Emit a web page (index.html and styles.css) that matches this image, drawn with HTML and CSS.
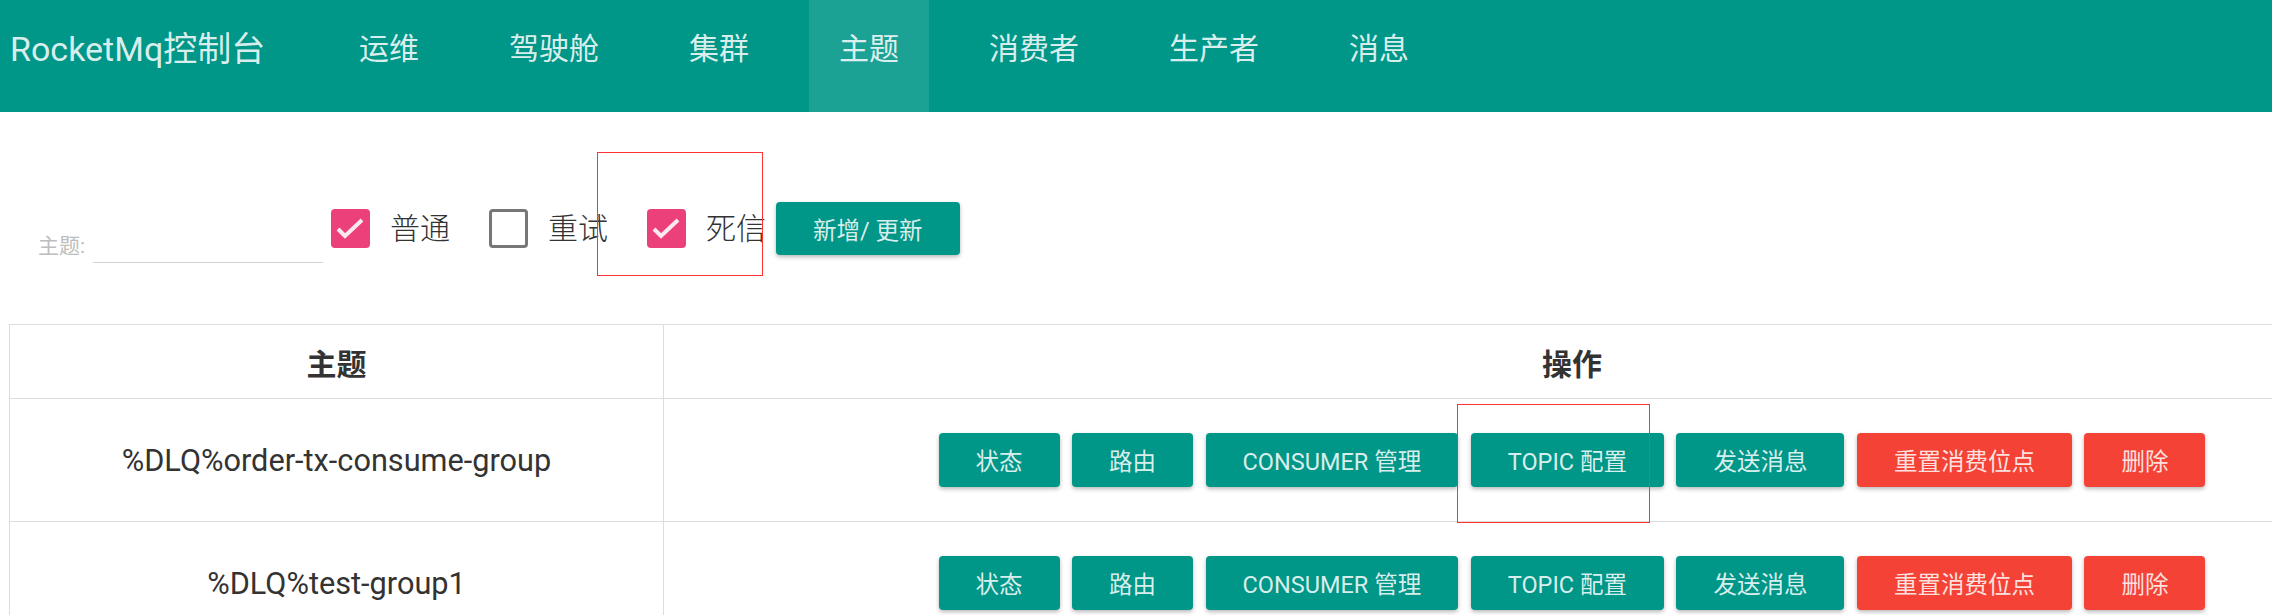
FILE: index.html
```html
<!DOCTYPE html>
<html lang="zh-CN">
<head>
    <meta charset="UTF-8">
    <meta name="viewport" content="width=device-width, initial-scale=1.0">
    <title>RocketMq控制台</title>
    <link rel="stylesheet" href="styles.css">
</head>
<body>
    <header class="navbar">
        <div class="brand">RocketMq控制台</div>
        <ul class="nav">
            <li>运维</li>
            <li>驾驶舱</li>
            <li>集群</li>
            <li class="active">主题</li>
            <li>消费者</li>
            <li>生产者</li>
            <li>消息</li>
        </ul>
    </header>

    <div class="toolbar">
        <div class="search">
            <label class="search-label">主题:</label>
            <input type="text" class="search-input">
        </div>
        <label class="check">
            <span class="box checked">
                <svg viewBox="0 0 39 39"><polyline points="7,20 14,27 31,11"/></svg>
            </span>
            普通
        </label>
        <label class="check">
            <span class="box"></span>
            重试
        </label>
        <label class="check">
            <span class="box checked">
                <svg viewBox="0 0 39 39"><polyline points="7,20 14,27 31,11"/></svg>
            </span>
            死信
        </label>
        <button class="btn">新增/ 更新</button>
        <!-- annotation drawn over the screenshot -->
        <div class="mark"></div>
    </div>

    <table class="topic-table">
        <colgroup>
            <col class="col-topic">
            <col>
        </colgroup>
        <thead>
            <tr>
                <th>主题</th>
                <th>操作</th>
            </tr>
        </thead>
        <tbody>
            <tr>
                <td>%DLQ%order-tx-consume-group</td>
                <td>
                    <div class="actions">
                        <button class="btn">状态</button>
                        <button class="btn">路由</button>
                        <button class="btn">CONSUMER 管理</button>
                        <button class="btn">TOPIC 配置</button>
                        <button class="btn">发送消息</button>
                        <button class="btn btn-danger">重置消费位点</button>
                        <button class="btn btn-danger">删除</button>
                    </div>
                    <div class="mark mark-topic"></div>
                </td>
            </tr>
            <tr>
                <td>%DLQ%test-group1</td>
                <td>
                    <div class="actions">
                        <button class="btn">状态</button>
                        <button class="btn">路由</button>
                        <button class="btn">CONSUMER 管理</button>
                        <button class="btn">TOPIC 配置</button>
                        <button class="btn">发送消息</button>
                        <button class="btn btn-danger">重置消费位点</button>
                        <button class="btn btn-danger">删除</button>
                    </div>
                </td>
            </tr>
        </tbody>
    </table>
</body>
</html>
```

FILE: styles.css
```css
html, body {
    overflow: hidden;
}
body {
    margin: 0;
    font-family: Roboto, "Noto Sans CJK SC", sans-serif;
    color: #333;
    background: #fff;
}
.navbar {
    display: flex;
    height: 112px;
    background-color: #009688;
    color: rgba(255, 255, 255, 0.86);
}
.brand {
    width: 329px;
    box-sizing: border-box;
    padding-left: 10px;
    font-size: 34px;
    line-height: 98px;
    white-space: nowrap;
}
.nav {
    display: flex;
    margin: 0;
    padding: 0;
    list-style: none;
}
.nav li {
    padding: 0 30px;
    margin-right: 30px;
    font-size: 30px;
    line-height: 98px;
    height: 112px;
}
.nav li.active {
    background: rgba(255, 255, 255, 0.11);
}
.toolbar {
    position: relative;
    display: flex;
    align-items: center;
    padding: 90px 0 69px 38px;
}
.search {
    display: flex;
    align-items: flex-end;
    align-self: flex-end;
    margin-bottom: -8px;
}
.search-label {
    font-size: 21px;
    line-height: 21px;
    color: #bdbdbd;
    margin-bottom: 6px;
}
.search-input {
    width: 230px;
    height: 30px;
    margin-left: 8px;
    padding: 0;
    border: none;
    border-bottom: 1px solid #d2d2d2;
    outline: none;
    background: transparent;
}
.check {
    display: flex;
    align-items: center;
    margin-right: 39px;
    font-size: 30px;
    font-weight: 300;
    color: #333;
    line-height: 40px;
}
.search + .check {
    margin-left: 8px;
}
.check:last-of-type {
    margin-right: 10px;
}
.box {
    display: inline-block;
    width: 39px;
    height: 39px;
    box-sizing: border-box;
    margin-right: 20px;
    border: 3px solid #777;
    border-radius: 4px;
}
.box.checked {
    border: none;
    background: #ec407a;
}
.box svg {
    display: block;
    width: 39px;
    height: 39px;
}
.box polyline {
    fill: none;
    stroke: #fde8ef;
    stroke-width: 4;
}
.btn {
    height: 53px;
    padding: 0 37px;
    border: none;
    border-radius: 4px;
    background: #009688;
    color: rgba(255, 255, 255, 0.86);
    font-family: Roboto, "Noto Sans CJK SC", sans-serif;
    font-size: 23.5px;
    white-space: nowrap;
    box-shadow: 0 2px 4px rgba(0, 0, 0, 0.28);
    cursor: pointer;
}
.btn-danger {
    background: #f44336;
}
.mark {
    position: absolute;
    left: 597px;
    top: 40px;
    width: 166px;
    height: 124px;
    box-sizing: border-box;
    border: 1px solid #f33;
}
.topic-table {
    width: 2472px;
    margin-left: 9px;
    border-collapse: collapse;
    table-layout: fixed;
    font-size: 30px;
}
.col-topic {
    width: 654px;
}
.topic-table th,
.topic-table td {
    position: relative;
    border: 1px solid #ddd;
    padding: 0;
    text-align: center;
    vertical-align: middle;
}
.topic-table th {
    height: 73px;
    font-weight: bold;
}
.topic-table td {
    height: 122px;
    font-size: 30.7px;
    color: #333;
}
.actions {
    display: flex;
    justify-content: center;
    gap: 12.5px;
}
.actions .btn {
    height: 54px;
}
.mark-topic {
    left: 793px;
    top: 5px;
    width: 193px;
    height: 119px;
}
```
